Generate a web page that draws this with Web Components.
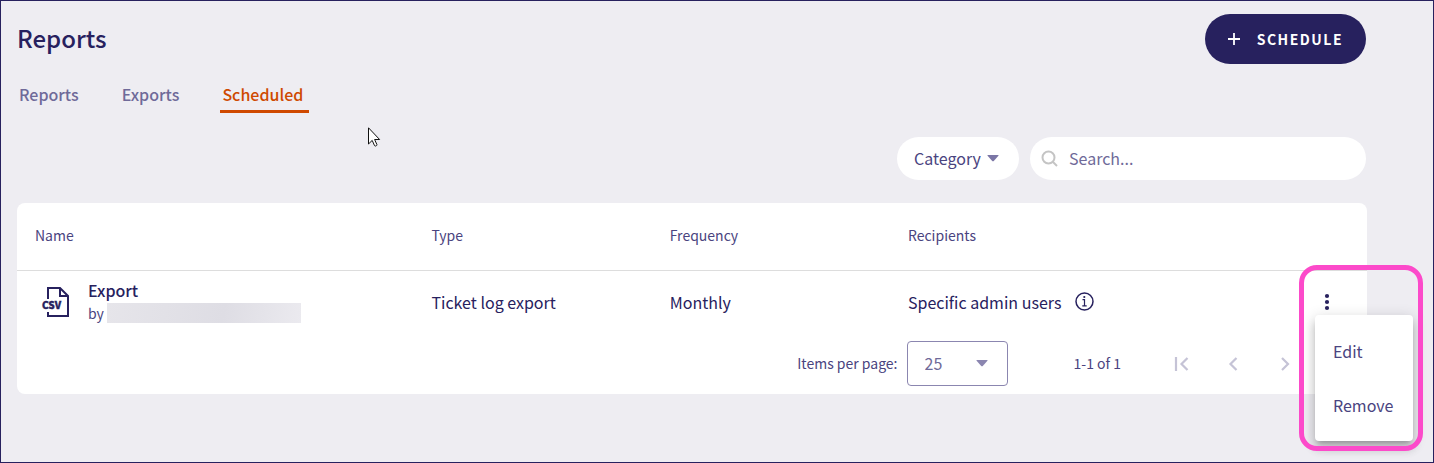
<!DOCTYPE html>
<html lang="en">
<head>
  <meta charset="utf-8">
  <meta name="viewport" content="width=device-width, initial-scale=1">
  <title>Reports</title>
  <style>
    body {
      margin: 0;
    }
  </style>
</head>
<body>
  <reports-page>
    <page-header slot="header">
      Reports
      <schedule-button slot="action">SCHEDULE</schedule-button>
    </page-header>
    <page-tabs slot="tabs"></page-tabs>
    <category-filter slot="filters"></category-filter>
    <search-field slot="filters"></search-field>
    <scheduled-table></scheduled-table>
    <table-paginator></table-paginator>
    <mouse-pointer slot="pointer"></mouse-pointer>
  </reports-page>

  <script>
    class ReportsPage extends HTMLElement {
      constructor () {
        super()
        this.shadow = this.attachShadow({ mode: 'open' })
      }

      connectedCallback () {
        this.render()
      }

      render () {
        this.shadow.innerHTML =
        /* html */
        `
          <style>
            :host {
              --ink: #27215e;
              --ink-soft: #4a4480;
              --ink-muted: #6f6a99;
              --accent: #cf4900;
              --line: #dddddd;
              background-color: #eeedf2;
              border: 1px solid var(--ink);
              box-sizing: border-box;
              color: var(--ink);
              display: block;
              font-family: "Noto Sans CJK SC", "Noto Sans", sans-serif;
              font-size: 16px;
              line-height: 24px;
              min-height: 100vh;
              overflow: hidden;
              padding: 13px 66px 12px 16px;
              position: relative;
            }

            .filters {
              display: flex;
              gap: 11px;
              justify-content: flex-end;
              margin: 24px 1px 23px 0;
            }

            .card {
              background-color: #fff;
              border-radius: 8px;
            }
          </style>
          <slot name="header"></slot>
          <slot name="tabs"></slot>
          <div class="filters"><slot name="filters"></slot></div>
          <main class="card"><slot></slot></main>
          <slot name="pointer"></slot>
        `
      }
    }

    customElements.define('reports-page', ReportsPage)

    class PageHeader extends HTMLElement {
      constructor () {
        super()
        this.shadow = this.attachShadow({ mode: 'open' })
      }

      connectedCallback () {
        this.render()
      }

      render () {
        this.shadow.innerHTML =
        /* html */
        `
          <style>
            :host {
              align-items: center;
              display: flex;
              justify-content: space-between;
              margin-right: 1px;
            }

            h1 {
              font-size: 24px;
              font-weight: 500;
              line-height: 32px;
              margin: 0;
              padding-bottom: 2px;
            }
          </style>
          <h1><slot></slot></h1>
          <slot name="action"></slot>
        `
      }
    }

    customElements.define('page-header', PageHeader)

    class ScheduleButton extends HTMLElement {
      constructor () {
        super()
        this.shadow = this.attachShadow({ mode: 'open' })
      }

      connectedCallback () {
        this.render()
      }

      render () {
        this.shadow.innerHTML =
        /* html */
        `
          <style>
            :host {
              display: block;
            }

            button {
              align-items: center;
              background-color: var(--ink);
              border: none;
              border-radius: 25px;
              color: #fff;
              cursor: pointer;
              display: flex;
              font-family: inherit;
              font-size: 14px;
              font-weight: 700;
              gap: 16px;
              height: 50px;
              letter-spacing: 1.5px;
              line-height: 24px;
              padding: 0 23px 0 22px;
            }
          </style>
          <button type="button">
            <svg width="14" height="14" viewBox="0 0 14 14" fill="none" stroke="currentColor" stroke-width="1.8" aria-hidden="true">
              <path d="M7 1v12M1 7h12"/>
            </svg>
            <span><slot></slot></span>
          </button>
        `
      }
    }

    customElements.define('schedule-button', ScheduleButton)

    class PageTabs extends HTMLElement {
      constructor () {
        super()
        this.shadow = this.attachShadow({ mode: 'open' })
      }

      connectedCallback () {
        this.render()
      }

      render () {
        this.shadow.innerHTML =
        /* html */
        `
          <style>
            :host {
              display: block;
              margin-top: 18px;
            }

            nav {
              align-items: flex-start;
              display: flex;
              gap: 35px;
            }

            a {
              border-bottom: 3px solid transparent;
              color: var(--ink-muted);
              font-weight: 500;
              padding: 0 6px 4px 2px;
              text-decoration: none;
            }

            a.active {
              border-color: var(--accent);
              color: var(--accent);
            }
          </style>
          <nav>
            <a href="#reports">Reports</a>
            <a href="#exports">Exports</a>
            <a class="active" href="#scheduled" aria-current="page">Scheduled</a>
          </nav>
        `
      }
    }

    customElements.define('page-tabs', PageTabs)

    class CategoryFilter extends HTMLElement {
      constructor () {
        super()
        this.shadow = this.attachShadow({ mode: 'open' })
      }

      connectedCallback () {
        this.render()
      }

      render () {
        this.shadow.innerHTML =
        /* html */
        `
          <style>
            :host {
              display: grid;
            }

            select,
            svg {
              grid-area: 1 / 1;
            }

            select {
              appearance: none;
              background-color: #fff;
              border: none;
              border-radius: 22px;
              color: var(--ink-soft);
              font-family: inherit;
              font-size: 16px;
              height: 43px;
              line-height: 24px;
              padding: 0 38px 2px 17px;
            }

            svg {
              align-self: center;
              color: #7b76a6;
              justify-self: end;
              margin-right: 20px;
              pointer-events: none;
            }
          </style>
          <select aria-label="Category">
            <option>Category</option>
          </select>
          <svg width="12" height="7" viewBox="0 0 12 7" fill="currentColor" aria-hidden="true">
            <path d="M1 0h10q1 0 .4.8L7 5.8q-1 1-2 0L.6.8Q0 0 1 0z"/>
          </svg>
        `
      }
    }

    customElements.define('category-filter', CategoryFilter)

    class SearchField extends HTMLElement {
      constructor () {
        super()
        this.shadow = this.attachShadow({ mode: 'open' })
      }

      connectedCallback () {
        this.render()
      }

      render () {
        this.shadow.innerHTML =
        /* html */
        `
          <style>
            :host {
              align-items: center;
              background-color: #fff;
              border-radius: 22px;
              box-sizing: border-box;
              display: flex;
              flex: 0 1 336px;
              gap: 10px;
              height: 43px;
              padding: 0 16px 0 11px;
            }

            input {
              background: transparent;
              border: none;
              color: var(--ink-soft);
              flex: 1;
              font-family: inherit;
              font-size: 16px;
              line-height: 24px;
              min-width: 0;
              outline: none;
              padding: 0 0 2px;
            }

            input::placeholder {
              color: var(--ink-muted);
              opacity: 1;
            }
          </style>
          <svg width="18" height="18" viewBox="0 0 18 18" fill="none" stroke="#c4c4c4" stroke-width="2" aria-hidden="true">
            <circle cx="7.5" cy="7.5" r="6"/>
            <path d="M11.5 11.5l4.5 4.5"/>
          </svg>
          <input type="text" placeholder="Search..." aria-label="Search">
        `
      }
    }

    customElements.define('search-field', SearchField)

    class ScheduledTable extends HTMLElement {
      constructor () {
        super()
        this.shadow = this.attachShadow({ mode: 'open' })
      }

      connectedCallback () {
        this.render()
      }

      render () {
        this.shadow.innerHTML =
        /* html */
        `
          <style>
            :host {
              display: block;
            }

            table {
              border-collapse: collapse;
              table-layout: fixed;
              width: 100%;
            }

            .name {
              width: 30.7%;
            }

            .type,
            .frequency {
              width: 17.65%;
            }

            th,
            td {
              box-sizing: border-box;
              padding: 0 0 2px;
              text-align: left;
            }

            th {
              border-bottom: 1px solid var(--line);
              color: var(--ink-soft);
              font-size: 14px;
              font-weight: 400;
              height: 67px;
            }

            td {
              height: 65px;
            }

            .export {
              align-items: center;
              display: flex;
              gap: 13px;
            }

            th:first-child span,
            .export {
              margin-left: 18px;
            }

            .title {
              font-weight: 500;
              line-height: 22px;
            }

            .author {
              align-items: center;
              color: var(--ink-soft);
              display: flex;
              font-size: 14px;
              gap: 3px;
              line-height: 20px;
              margin: 2px 0;
            }

            .redacted {
              background: linear-gradient(100deg, #e6e5ea, #dedde4 60%, #ebeaef);
              height: 20px;
              width: 194px;
            }

            .recipients {
              align-items: center;
              display: flex;
              gap: 14px;
            }

            row-menu {
              margin-left: auto;
              margin-right: 28px;
            }
          </style>
          <table>
            <thead>
              <tr>
                <th class="name" scope="col"><span>Name</span></th>
                <th class="type" scope="col">Type</th>
                <th class="frequency" scope="col">Frequency</th>
                <th scope="col">Recipients</th>
              </tr>
            </thead>
            <tbody>
              <tr>
                <td>
                  <div class="export">
                    <svg width="40" height="40" viewBox="0 0 40 40" fill="none" stroke="currentColor" stroke-width="2" aria-hidden="true">
                      <path d="M13 17V6h12l8 8v20H13v-4"/>
                      <path d="M25 6v8h8"/>
                      <text x="7" y="27" fill="currentColor" stroke-width="0.4" font-size="10" font-weight="900">CSV</text>
                    </svg>
                    <div>
                      <div class="title">Export</div>
                      <div class="author">by <span class="redacted"></span></div>
                    </div>
                  </div>
                </td>
                <td>Ticket log export</td>
                <td>Monthly</td>
                <td>
                  <div class="recipients">
                    Specific admin users
                    <svg width="19" height="19" viewBox="0 0 19 19" fill="none" stroke="currentColor" stroke-width="1.5" aria-hidden="true">
                      <circle cx="9.5" cy="9.5" r="8.5"/>
                      <path d="M7.5 7.6h2v6M7.3 13.8h4.4" stroke-width="1.2"/>
                      <circle cx="9.3" cy="5" r="1.1" fill="currentColor" stroke="none"/>
                    </svg>
                    <row-menu></row-menu>
                  </div>
                </td>
              </tr>
            </tbody>
          </table>
        `
      }
    }

    customElements.define('scheduled-table', ScheduledTable)

    class RowMenu extends HTMLElement {
      constructor () {
        super()
        this.shadow = this.attachShadow({ mode: 'open' })
      }

      connectedCallback () {
        this.render()
      }

      render () {
        this.shadow.innerHTML =
        /* html */
        `
          <style>
            :host {
              display: block;
              height: 24px;
              position: relative;
              width: 24px;
            }

            button {
              background: transparent;
              border: none;
              color: inherit;
              cursor: pointer;
              font-family: inherit;
              padding: 0;
            }

            .toggle {
              display: block;
            }

            .toggle svg {
              display: block;
            }

            .menu {
              background-color: #fff;
              border-radius: 4px;
              box-shadow: 0 5px 5px -3px rgba(0, 0, 0, 0.2), 0 8px 10px 1px rgba(0, 0, 0, 0.14), 0 3px 14px 2px rgba(0, 0, 0, 0.12);
              display: flex;
              flex-direction: column;
              left: 0;
              min-width: 98px;
              padding: 9px 0;
              position: absolute;
              top: 25px;
              z-index: 1;
            }

            .menu button {
              color: var(--ink-soft);
              font-size: 16px;
              line-height: 24px;
              padding: 15px 18px;
              text-align: left;
            }

            .highlight {
              border: 5px solid #fc4aca;
              border-radius: 18px;
              bottom: -137px;
              box-sizing: border-box;
              left: -16px;
              pointer-events: none;
              position: absolute;
              right: -84px;
              top: -25px;
              z-index: 2;
            }
          </style>
          <button class="toggle" type="button" aria-label="Row actions" aria-expanded="true">
            <svg width="24" height="24" viewBox="0 0 24 24" fill="currentColor" aria-hidden="true">
              <circle cx="12" cy="6" r="2.1"/>
              <circle cx="12" cy="12" r="2.1"/>
              <circle cx="12" cy="18" r="2.1"/>
            </svg>
          </button>
          <div class="menu" role="menu">
            <button type="button" role="menuitem">Edit</button>
            <button type="button" role="menuitem">Remove</button>
          </div>
          <div class="highlight"></div>
        `

        const toggle = this.shadow.querySelector('.toggle')
        const menu = this.shadow.querySelector('.menu')

        toggle.addEventListener('click', () => {
          const open = menu.style.display === 'none'
          menu.style.display = open ? '' : 'none'
          toggle.setAttribute('aria-expanded', open)
        })
      }
    }

    customElements.define('row-menu', RowMenu)

    class TablePaginator extends HTMLElement {
      constructor () {
        super()
        this.shadow = this.attachShadow({ mode: 'open' })
      }

      connectedCallback () {
        this.render()
      }

      render () {
        this.shadow.innerHTML =
        /* html */
        `
          <style>
            :host {
              align-items: center;
              color: var(--ink-soft);
              display: flex;
              font-size: 14px;
              justify-content: flex-end;
              padding: 6px 18px 8px;
            }

            label,
            .range {
              padding-bottom: 2px;
            }

            .size {
              display: grid;
              margin-left: 9px;
              margin-right: 66px;
            }

            select,
            .size svg {
              grid-area: 1 / 1;
            }

            select {
              appearance: none;
              background-color: #fff;
              border: 1px solid #8b86b0;
              border-radius: 4px;
              color: var(--ink-muted);
              font-family: inherit;
              font-size: 16px;
              height: 45px;
              line-height: 24px;
              padding: 0 17px 2px;
              width: 101px;
            }

            .size svg {
              align-self: center;
              color: #8b86b0;
              justify-self: end;
              margin-right: 20px;
              pointer-events: none;
            }

            .pages {
              display: flex;
              gap: 28px;
              margin-left: 48px;
            }

            button {
              background: transparent;
              border: none;
              color: #c5c3d6;
              padding: 0;
            }

            button svg {
              display: block;
            }
          </style>
          <label for="size">Items per page:</label>
          <div class="size">
            <select id="size">
              <option>25</option>
            </select>
            <svg width="12" height="7" viewBox="0 0 12 7" fill="currentColor" aria-hidden="true">
              <path d="M1 0h10q1 0 .4.8L7 5.8q-1 1-2 0L.6.8Q0 0 1 0z"/>
            </svg>
          </div>
          <span class="range">1-1 of 1</span>
          <div class="pages">
            <button type="button" aria-label="First page" disabled>
              <svg width="24" height="24" viewBox="0 0 24 24" fill="none" stroke="currentColor" stroke-width="2.2" aria-hidden="true">
                <path d="M7 5v14M18.5 6l-6 6 6 6"/>
              </svg>
            </button>
            <button type="button" aria-label="Previous page" disabled>
              <svg width="24" height="24" viewBox="0 0 24 24" fill="none" stroke="currentColor" stroke-width="2.2" aria-hidden="true">
                <path d="M15.5 6l-6 6 6 6"/>
              </svg>
            </button>
            <button type="button" aria-label="Next page" disabled>
              <svg width="24" height="24" viewBox="0 0 24 24" fill="none" stroke="currentColor" stroke-width="2.2" aria-hidden="true">
                <path d="M9 6l6 6-6 6"/>
              </svg>
            </button>
            <button type="button" aria-label="Last page" disabled>
              <svg width="24" height="24" viewBox="0 0 24 24" fill="none" stroke="currentColor" stroke-width="2.2" aria-hidden="true">
                <path d="M17 5v14M5.5 6l6 6-6 6"/>
              </svg>
            </button>
          </div>
        `
      }
    }

    customElements.define('table-paginator', TablePaginator)

    class MousePointer extends HTMLElement {
      constructor () {
        super()
        this.shadow = this.attachShadow({ mode: 'open' })
      }

      connectedCallback () {
        this.render()
      }

      render () {
        this.shadow.innerHTML =
        /* html */
        `
          <style>
            :host {
              display: block;
              left: 367px;
              pointer-events: none;
              position: absolute;
              top: 126px;
            }

            svg {
              display: block;
            }
          </style>
          <svg width="13" height="20" viewBox="0 0 13 20" fill="#fff" stroke="#111" aria-hidden="true">
            <path d="M.5.8v16.200l3.700-3.600 2.300 5.200q.4.700 1.200.4l.8-.4q.7-.4.400-1.100l-2.300-5h5z"/>
          </svg>
        `
      }
    }

    customElements.define('mouse-pointer', MousePointer)
  </script>
</body>
</html>
